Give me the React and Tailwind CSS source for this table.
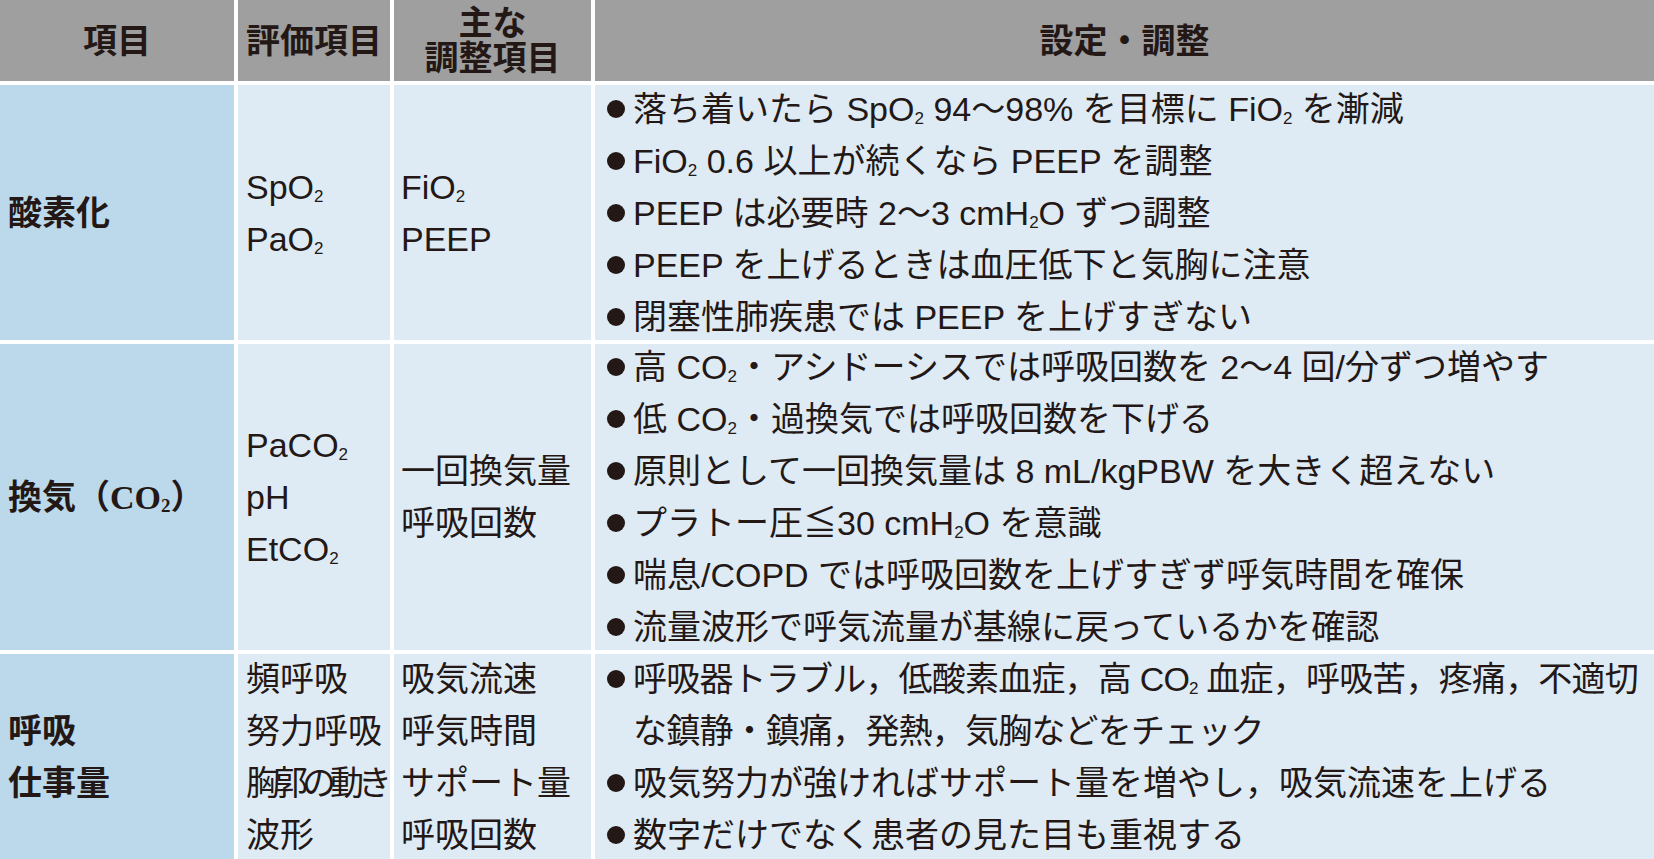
import React from "react";

// 下付きの「2」
const Sub = ({ serif }) => (
  <span
    className={
      serif
        ? "relative top-[3px] font-['Liberation_Serif'] text-[19px] leading-none font-bold"
        : "relative top-[3px] text-[17px] leading-none"
    }
  >
    2
  </span>
);

const Item = ({ children, lines = 1, className = "" }) => (
  <li className={"flex overflow-visible " + (lines === 2 ? "h-[104px]" : "h-[52px]")}>
    <span className="flex h-[52px] w-[38px] shrink-0 items-center pl-[12px]">
      <span className="h-[18px] w-[18px] rounded-full bg-[#231815]" />
    </span>
    <span className={"whitespace-nowrap " + className}>{children}</span>
  </li>
);

const Line = ({ children, className = "" }) => (
  <div className={"h-[52px] whitespace-nowrap " + className}>{children}</div>
);

const headCell = "flex items-center justify-center bg-[#9f9f9f] font-bold";
const firstCell = "flex items-center bg-[#bcd9eb] pl-[8px] font-bold";
const cell = "flex items-center bg-[#deebf5]";

const App = () => {
  return (
    <div className="h-[859px] w-[1654px] overflow-hidden bg-white font-['Liberation_Sans','Noto_Sans_CJK_JP',sans-serif] text-[34px] leading-[52px] text-[#231815]">
      <div className="grid grid-cols-[234px_152px_197px_1fr] grid-rows-[81px_255px_306px_205px] gap-x-[4px] gap-y-[4px]">
        {/* 見出し */}
        <div className={headCell}>項目</div>
        <div className={headCell}>評価項目</div>
        <div className={headCell + " flex-col leading-[35px]"}>
          <span>主な</span>
          <span>調整項目</span>
        </div>
        <div className={headCell}>設定・調整</div>

        {/* 酸素化 */}
        <div className={firstCell}>酸素化</div>
        <div className={cell + " pl-[8px]"}>
          <div>
            <Line>
              SpO<Sub />
            </Line>
            <Line>
              PaO<Sub />
            </Line>
          </div>
        </div>
        <div className={cell + " pl-[7px]"}>
          <div>
            <Line>
              FiO<Sub />
            </Line>
            <Line>PEEP</Line>
          </div>
        </div>
        <div className={cell}>
          <ul>
            <Item>
              落ち着いたら SpO<Sub /> 94〜98% を目標に FiO<Sub /> を漸減
            </Item>
            <Item>
              FiO<Sub /> 0.6 以上が続くなら PEEP を調整
            </Item>
            <Item>
              PEEP は必要時 2〜3 cmH<Sub />O ずつ調整
            </Item>
            <Item>PEEP を上げるときは血圧低下と気胸に注意</Item>
            <Item>閉塞性肺疾患では PEEP を上げすぎない</Item>
          </ul>
        </div>

        {/* 換気 */}
        <div className={firstCell}>
          <Line>
            換気（
            <span className="font-['Liberation_Serif'] font-bold">CO</span>
            <Sub serif />）
          </Line>
        </div>
        <div className={cell + " pl-[8px]"}>
          <div>
            <Line>
              PaCO<Sub />
            </Line>
            <Line>pH</Line>
            <Line>
              EtCO<Sub />
            </Line>
          </div>
        </div>
        <div className={cell + " pl-[7px]"}>
          <div>
            <Line>一回換気量</Line>
            <Line>呼吸回数</Line>
          </div>
        </div>
        <div className={cell}>
          <ul>
            <Item>
              高 CO<Sub />・アシドーシスでは呼吸回数を 2〜4 回/分ずつ増やす
            </Item>
            <Item>
              低 CO<Sub />・過換気では呼吸回数を下げる
            </Item>
            <Item>原則として一回換気量は 8 mL/kgPBW を大きく超えない</Item>
            <Item>
              プラトー圧≦30 cmH<Sub />O を意識
            </Item>
            <Item>喘息/COPD では呼吸回数を上げすぎず呼気時間を確保</Item>
            <Item>流量波形で呼気流量が基線に戻っているかを確認</Item>
          </ul>
        </div>

        {/* 呼吸仕事量 */}
        <div className={firstCell}>
          <div>
            <Line>呼吸</Line>
            <Line>仕事量</Line>
          </div>
        </div>
        <div className={cell + " pl-[8px]"}>
          <div>
            <Line>頻呼吸</Line>
            <Line>努力呼吸</Line>
            <Line className="tracking-[-6px]">胸郭の動き</Line>
            <Line>波形</Line>
          </div>
        </div>
        <div className={cell + " pl-[7px]"}>
          <div>
            <Line>吸気流速</Line>
            <Line>呼気時間</Line>
            <Line>サポート量</Line>
            <Line>呼吸回数</Line>
          </div>
        </div>
        <div className={cell}>
          <ul>
            <Item lines={2} className="tracking-[-0.8px]">
              <div className="h-[52px]">
                呼吸器トラブル，低酸素血症，高 CO<Sub /> 血症，呼吸苦，疼痛，不適切
              </div>
              <div className="h-[52px]">な鎮静・鎮痛，発熱，気胸などをチェック</div>
            </Item>
            <Item>吸気努力が強ければサポート量を増やし，吸気流速を上げる</Item>
            <Item>数字だけでなく患者の見た目も重視する</Item>
          </ul>
        </div>
      </div>
    </div>
  );
};

export default App;
